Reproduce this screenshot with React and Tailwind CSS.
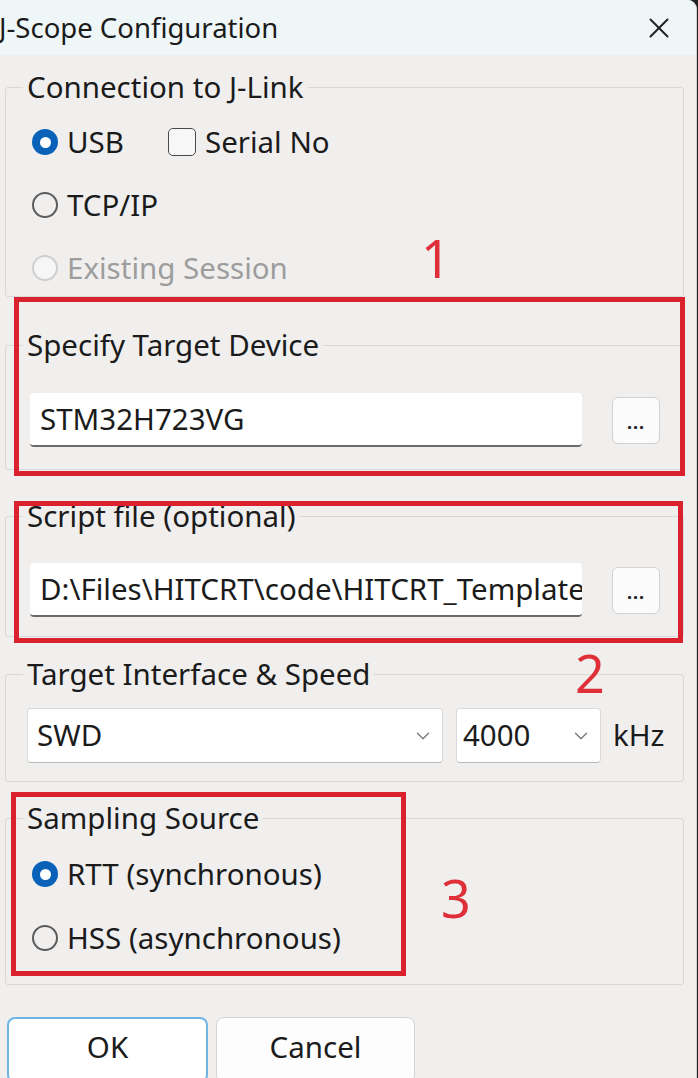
import { ChevronDown, X } from 'lucide-react';

function Radio({ checked, disabled, label }) {
  return (
    <div className="flex items-center h-[40px]">
      {checked ? (
        <span className="w-[26px] h-[26px] rounded-full bg-[#0a62b8] flex items-center justify-center">
          <span className="w-[11px] h-[11px] rounded-full bg-white" />
        </span>
      ) : (
        <span
          className={`w-[26px] h-[26px] rounded-full border-2 ${
            disabled ? 'border-[#cfcfcf] bg-[#f6f6f6]' : 'border-[#5c5c5c]'
          }`}
        />
      )}
      <span className={`ml-[9px] ${disabled ? 'text-[#9d9d9d]' : 'text-[#1b1b1b]'}`}>{label}</span>
    </div>
  );
}

function Group({ title, className, inner, children }) {
  return (
    <fieldset className={`border border-[#d8d8d8] rounded-[3px] ${className}`}>
      <legend className="ml-[17px] px-[4px] leading-[30px]">{title}</legend>
      <div className={inner}>{children}</div>
    </fieldset>
  );
}

function Browse() {
  return (
    <button className="w-[48px] h-[47px] rounded-[6px] border border-[#d2d2d2] bg-[#fbfbfb] flex items-end justify-center pb-[12px] text-[18px] font-bold leading-none tracking-[1px] text-[#222]">
      ...
    </button>
  );
}

export default function App() {
  return (
    <div className="bg-[#202020] w-[698px] h-[1078px] overflow-hidden">
      <div className="relative w-[697px] h-[1078px] overflow-hidden rounded-tr-[9px] bg-[#f0efee] text-[29.5px] text-[#1b1b1b] font-['Noto_Sans',sans-serif] border-r border-[#cfcfcf]">
        {/* Title bar */}
        <div className="h-[55px] bg-[#eef6f8] flex items-center justify-between pr-[20px]">
          <span className="-ml-[1px] text-[27.5px]">J-Scope Configuration</span>
          <X className="w-[34px] h-[34px] text-[#222]" strokeWidth={1.4} />
        </div>

        <div className="pl-[5px] pr-[12px]">
          {/* Connection */}
          <Group title="Connection to J-Link" className="mt-[17px] pb-[8px]" inner="pt-[20px] pl-[26px]">
            <div className="flex flex-col gap-[23px]">
              <div className="flex items-center">
                <Radio checked label="USB" />
                <div className="flex items-center h-[40px] ml-[44px]">
                  <span className="w-[28px] h-[28px] rounded-[5px] border-[1.5px] border-[#4a4a4a] bg-[#f8f8f8]" />
                  <span className="ml-[9px]">Serial No</span>
                </div>
              </div>
              <Radio label="TCP/IP" />
              <Radio disabled label="Existing Session" />
            </div>
          </Group>

          {/* Target device */}
          <Group title="Specify Target Device" className="mt-[33px] pb-[22px]" inner="pt-[33px] pl-[24px]">
            <div className="flex items-center">
              <div className="w-[552px] h-[54px] bg-white rounded-[4px] border-b-2 border-[#6b6b6b] flex items-center pl-[10px]">
                STM32H723VG
              </div>
              <div className="ml-[30px]">
                <Browse />
              </div>
            </div>
          </Group>

          {/* Script file */}
          <Group title="Script file (optional)" className="mt-[31px] pb-[19px]" inner="pt-[32px] pl-[24px]">
            <div className="flex items-center">
              <div className="w-[552px] h-[54px] bg-white rounded-[4px] border-b-2 border-[#6b6b6b] flex items-center pl-[10px] overflow-hidden whitespace-nowrap">
                D:\Files\HITCRT\code\HITCRT_Template
              </div>
              <div className="ml-[30px]">
                <Browse />
              </div>
            </div>
          </Group>

          {/* Interface & speed */}
          <Group title="Target Interface & Speed" className="mt-[22px] pb-[18px]" inner="pt-[19px] pl-[21px]">
            <div className="flex items-center">
              <div className="w-[416px] h-[55px] bg-white rounded-[4px] border border-[#dadada] border-b-[#b8b8b8] flex items-center justify-between pl-[9px] pr-[8px]">
                <span>SWD</span>
                <ChevronDown className="w-[22px] h-[22px] text-[#777]" strokeWidth={1.4} />
              </div>
              <div className="ml-[13px] w-[145px] h-[55px] bg-white rounded-[4px] border border-[#dadada] border-b-[#b8b8b8] flex items-center justify-between pl-[6px] pr-[8px]">
                <span>4000</span>
                <ChevronDown className="w-[22px] h-[22px] text-[#777]" strokeWidth={1.4} />
              </div>
              <span className="ml-[12px]">kHz</span>
            </div>
          </Group>

          {/* Sampling source */}
          <Group title="Sampling Source" className="mt-[21px] pb-[26px]" inner="pt-[21px] pl-[26px]">
            <div className="flex flex-col gap-[24px]">
              <Radio checked label="RTT (synchronous)" />
              <Radio label="HSS (asynchronous)" />
            </div>
          </Group>

          {/* Buttons */}
          <div className="mt-[32px] flex gap-[8px] pl-[2px]">
            <button className="w-[201px] h-[66px] rounded-[8px] border-2 border-[#6fb6e4] bg-white pb-[6px]">OK</button>
            <button className="w-[199px] h-[66px] rounded-[8px] border border-[#d4d4d4] bg-[#fdfdfd] pb-[6px]">Cancel</button>
          </div>
        </div>

        {/* Annotations */}
        <div className="absolute left-[14px] top-[297px] w-[671px] h-[179px] border-[5px] border-[#d9222d]" />
        <div className="absolute left-[14px] top-[501px] w-[669px] h-[142px] border-[5px] border-[#d9222d]" />
        <div className="absolute left-[11px] top-[792px] w-[395px] h-[184px] border-[5px] border-[#d9222d]" />
        <span className="absolute left-[421px] top-[232px] text-[52px] leading-none text-[#df2f38]">1</span>
        <span className="absolute left-[575px] top-[647px] text-[52px] leading-none text-[#df2f38]">2</span>
        <span className="absolute left-[441px] top-[872px] text-[52px] leading-none text-[#df2f38]">3</span>
      </div>
    </div>
  );
}
